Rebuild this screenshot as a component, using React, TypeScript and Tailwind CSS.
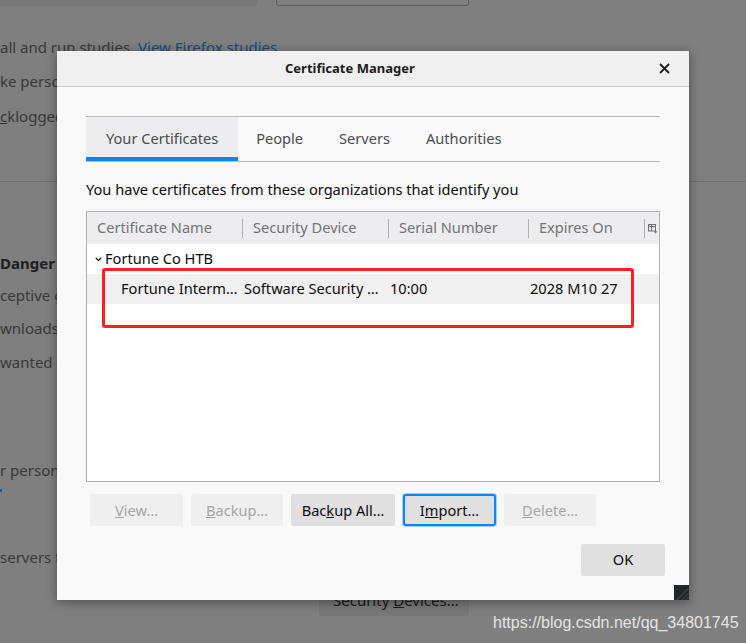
import React from "react";

function Btn({
  w,
  children,
  disabled,
  focus,
}: {
  w: string;
  children: React.ReactNode;
  disabled?: boolean;
  focus?: boolean;
}) {
  const base =
    "h-[32px] flex items-center justify-center rounded-[2px] text-[14.6px] leading-none whitespace-nowrap";
  if (disabled)
    return (
      <div className={`${base} ${w} bg-[#efefef] text-[#a6a6a6]`}>
        <span>{children}</span>
      </div>
    );
  if (focus)
    return (
      <div
        className={`${base} ${w} bg-[#e0e0e0] text-[#0c0c0d] border-2 border-[#0a84ff] shadow-[0_0_0_1px_rgba(10,132,255,0.35)] rounded-[3px]`}
      >
        <span>{children}</span>
      </div>
    );
  return (
    <div className={`${base} ${w} bg-[#e0e0e0] text-[#0c0c0d]`}>
      <span>{children}</span>
    </div>
  );
}

export default function App() {
  return (
    <div className="relative w-[746px] h-[643px] overflow-hidden bg-[#7f7f7f] font-['Noto_Sans',sans-serif]">
      {/* dimmed background page */}
      <div className="flex flex-col text-[15px] leading-[20px] text-[#383839]">
        <div className="flex h-[6px]">
          <div className="w-[258px] h-[6px] bg-[#777777] rounded-b-[3px]" />
          <div className="ml-[18px] w-[193px] h-[6px] border border-t-0 border-[#5c5c5c] rounded-b-[3px]" />
        </div>
        <div className="mt-[31px] whitespace-nowrap">
          all and run studies. <span className="text-[#174a7c]">View Firefox studies</span>
        </div>
        <div className="mt-[14px] whitespace-nowrap">ke personalized extension recommendations</div>
        <div className="mt-[15px] whitespace-nowrap">
          <span className="underline">c</span>klogged crash reports
        </div>
        <div className="mt-[55px] h-px w-full bg-[#6e6e6e]" />
        <div className="mt-[71px] whitespace-nowrap font-bold text-[#1e1e1f]">Danger content</div>
        <div className="mt-[12px] whitespace-nowrap">ceptive content</div>
        <div className="mt-[13px] whitespace-nowrap">wnloads</div>
        <div className="mt-[14px] whitespace-nowrap">wanted and uncommon software</div>
        <div className="mt-[88px] whitespace-nowrap">r personal certificate</div>
        <div className="h-[20px] flex items-center">
          <div className="w-[2px] h-[3px] bg-[#1d5a94]" />
        </div>
        <div className="mt-[47px] whitespace-nowrap">servers to confirm</div>
        <div className="mt-[17px] ml-[319px] w-[150px] h-[32px] bg-[#777777] rounded-[2px] flex items-center pl-[14px] text-[#1a1a1a] whitespace-nowrap">
          <span>
            Security <span className="underline">D</span>evices…
          </span>
        </div>
      </div>

      {/* dialog */}
      <div className="absolute left-[57px] top-[51px] w-[632px] h-[549px] bg-[#f9f9f9] shadow-[0_2px_10px_rgba(0,0,0,0.4)] flex flex-col">
        <div className="h-[36px] shrink-0 bg-[#f0f0f0] border-b border-[#c9c9c9] flex items-center">
          <div className="ml-[228px] text-[13px] font-bold text-[#1b1b1b]">Certificate Manager</div>
          <svg className="ml-auto mr-[19px]" width="11" height="11" viewBox="0 0 11 11">
            <path d="M1 1 L10 10 M10 1 L1 10" stroke="#1b1b1b" strokeWidth="1.8" fill="none" />
          </svg>
        </div>

        <div className="flex flex-col px-[29px] pt-[29px] text-[14.6px]">
          {/* tabs */}
          <div className="flex h-[46px] border-y border-[#b9b9bb] text-[#4a4a4f]">
            <div className="px-[20px] pt-[4px] flex items-center bg-[#ededf0] border-b-[4px] border-[#0a84ff]">
              Your Certificates
            </div>
            <div className="px-[18px] flex items-center">People</div>
            <div className="px-[18px] flex items-center">Servers</div>
            <div className="px-[18px] flex items-center">Authorities</div>
          </div>

          <div className="mt-[17px] leading-[20px] text-[#0c0c0d]">
            You have certificates from these organizations that identify you
          </div>

          {/* tree */}
          <div className="mt-[12px] h-[271px] border border-[#b1b1b3] bg-white flex flex-col">
            <div className="h-[32px] shrink-0 bg-[#ededf0] flex text-[#737373]">
              <div className="w-[155px] flex items-center pl-[10px] whitespace-nowrap">Certificate Name</div>
              <div className="w-[146px] flex items-center whitespace-nowrap">
                <div className="w-px h-[19px] bg-[#b1b1b3]" />
                <span className="ml-[10px]">Security Device</span>
              </div>
              <div className="w-[140px] flex items-center whitespace-nowrap">
                <div className="w-px h-[19px] bg-[#b1b1b3]" />
                <span className="ml-[10px]">Serial Number</span>
              </div>
              <div className="w-[116px] flex items-center whitespace-nowrap">
                <div className="w-px h-[19px] bg-[#b1b1b3]" />
                <span className="ml-[10px]">Expires On</span>
              </div>
              <div className="flex-1 flex items-center">
                <div className="w-px h-[19px] bg-[#b1b1b3]" />
                <svg className="ml-[3px] mt-[2px]" width="10" height="10" viewBox="0 0 10 10">
                  <rect x="0.5" y="0.5" width="7" height="6.5" fill="none" stroke="#707070" strokeWidth="1" />
                  <line x1="0.5" y1="2.5" x2="7.5" y2="2.5" stroke="#707070" strokeWidth="1" />
                  <line x1="3.5" y1="0.5" x2="3.5" y2="7" stroke="#707070" strokeWidth="1" />
                  <path d="M5.5 7.2 L9.5 7.2 L7.5 9.6 Z" fill="#707070" />
                </svg>
              </div>
            </div>
            <div className="h-[30px] flex items-center text-[#0c0c0d] whitespace-nowrap">
              <svg className="ml-[8px] mr-[3px]" width="7" height="5" viewBox="0 0 7 5">
                <path d="M0.8 0.8 L3.5 3.6 L6.2 0.8" stroke="#1b1b1b" strokeWidth="1.3" fill="none" />
              </svg>
              <span>Fortune Co HTB</span>
            </div>
            <div className="h-[30px] flex items-center bg-[#f0f0f0] text-[#0c0c0d] whitespace-nowrap">
              <div className="w-[155px] pl-[34px]">Fortune Interm…</div>
              <div className="w-[146px] pl-[2px]">Software Security …</div>
              <div className="w-[140px] pl-[2px]">10:00</div>
              <div className="w-[116px] pl-[2px]">2028 M10 27</div>
            </div>
          </div>

          {/* buttons */}
          <div className="mt-[12px] ml-[4px] flex gap-[8px]">
            <Btn w="w-[93px]" disabled>
              <span className="underline">V</span>iew…
            </Btn>
            <Btn w="w-[92px]" disabled>
              <span className="underline">B</span>ackup…
            </Btn>
            <Btn w="w-[104px]">
              Bac<span className="underline">k</span>up All…
            </Btn>
            <Btn w="w-[93px]" focus>
              I<span className="underline">m</span>port…
            </Btn>
            <Btn w="w-[92px]" disabled>
              <span className="underline">D</span>elete…
            </Btn>
          </div>

          <div className="mt-[18px] -mr-[5px] flex justify-end">
            <div className="w-[84px] h-[32px] bg-[#e0e0e0] rounded-[2px] flex items-center justify-center text-[14.6px] text-[#0c0c0d]">
              OK
            </div>
          </div>
        </div>

        {/* resize grip */}
        <svg className="absolute right-0 bottom-0" width="15" height="15" viewBox="0 0 15 15">
          <rect width="15" height="15" fill="#232528" />
          <path d="M15 3 L3 15 M15 8 L8 15 M15 12 L12 15" stroke="#3d4045" strokeWidth="1.2" />
        </svg>
      </div>

      {/* annotation */}
      <div className="absolute left-[102px] top-[268px] w-[532px] h-[60px] border-[3px] border-[#ff1f1f] rounded-[3px]" />

      {/* watermark */}
      <div className="absolute left-[493px] top-[613px] text-[16px] leading-[20px] text-[#e4e4e4] font-['Liberation_Sans',Arial,sans-serif] whitespace-nowrap">
        https://blog.csdn.net/qq_34801745
      </div>
    </div>
  );
}
